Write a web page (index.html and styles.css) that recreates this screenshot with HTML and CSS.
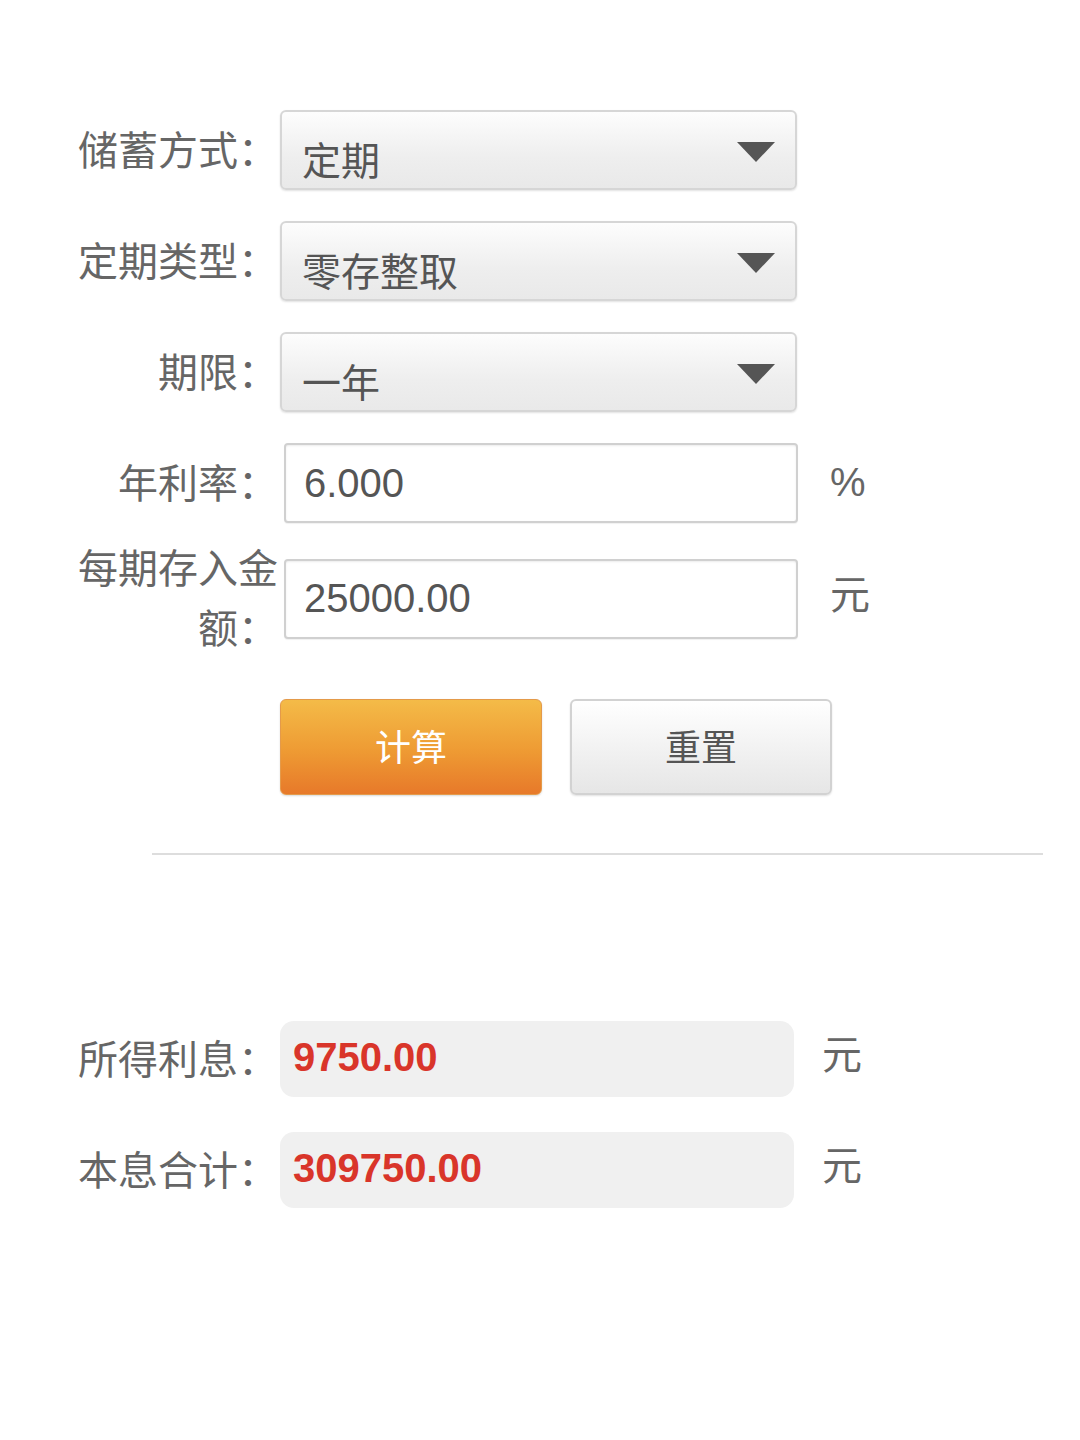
FILE: index.html
```html
<!DOCTYPE html>
<html lang="zh">
<head>
<meta charset="utf-8">
<title>存款计算器</title>
<link rel="stylesheet" href="styles.css">
</head>
<body>
<div class="page">
  <div class="form">
    <div class="row">
      <div class="label">储蓄方式：</div>
      <div class="select"><span class="sel-text">定期</span><span class="arrow"></span></div>
    </div>
    <div class="row">
      <div class="label">定期类型：</div>
      <div class="select"><span class="sel-text">零存整取</span><span class="arrow"></span></div>
    </div>
    <div class="row">
      <div class="label">期限：</div>
      <div class="select"><span class="sel-text">一年</span><span class="arrow"></span></div>
    </div>
    <div class="row">
      <div class="label">年利率：</div>
      <div class="input">6.000</div>
      <div class="unit unit-pct">%</div>
    </div>
    <div class="row tall">
      <div class="label">每期存入金额：</div>
      <div class="input">25000.00</div>
      <div class="unit">元</div>
    </div>
    <div class="buttons">
      <div class="btn btn-primary">计算</div>
      <div class="btn btn-default">重置</div>
    </div>
  </div>
  <div class="divider"></div>
  <div class="results">
    <div class="row">
      <div class="label">所得利息：</div>
      <div class="result">9750.00</div>
      <div class="unit unit-r">元</div>
    </div>
    <div class="row result-row2">
      <div class="label">本息合计：</div>
      <div class="result">309750.00</div>
      <div class="unit unit-r">元</div>
    </div>
  </div>
</div>
</body>
</html>
```
FILE: styles.css
```css
html, body {
  margin: 0;
  padding: 0;
  background: #ffffff;
}
body {
  font-family: "Liberation Sans", "Noto Sans CJK SC", sans-serif;
  color: #666666;
}
.page {
  width: 1080px;
}
.form {
  padding-top: 110px;
}
.row {
  display: flex;
  align-items: center;
  margin-top: 31px;
}
.form .row:first-child {
  margin-top: 0;
}
.row.tall {
  margin-top: 13px;
}
.label {
  width: 200px;
  margin-left: 78px;
  flex: none;
  text-align: right;
  font-family: "Noto Sans CJK SC", sans-serif;
  font-size: 40px;
  line-height: 60px;
  padding-bottom: 5px;
  color: #666666;
}
.select {
  box-sizing: border-box;
  width: 517px;
  height: 80px;
  margin-left: 2px;
  border: 2px solid #d6d6d6;
  border-radius: 6px;
  background: linear-gradient(#fdfdfd, #eeeeee 60%, #e9e9e9);
  box-shadow: 0 1px 2px rgba(0,0,0,0.12);
  display: flex;
  align-items: center;
  justify-content: space-between;
  padding: 0 20px 0 20px;
}
.sel-text {
  font-family: "Noto Sans CJK SC", sans-serif;
  font-size: 39px;
  color: #555555;
  padding-top: 16px;
  line-height: 1;
}
.arrow {
  width: 0;
  height: 0;
  border-left: 19px solid transparent;
  border-right: 19px solid transparent;
  border-top: 20px solid #555555;
  margin-top: 4px;
}
.input {
  box-sizing: border-box;
  width: 514px;
  height: 80px;
  margin-left: 6px;
  border: 2px solid #d0d0d0;
  border-radius: 4px;
  background: #ffffff;
  box-shadow: inset 0 1px 2px rgba(0,0,0,0.08), 0 1px 1px rgba(0,0,0,0.06);
  display: flex;
  align-items: center;
  padding-left: 18px;
  font-size: 40px;
  color: #555555;
}
.unit {
  margin-left: 32px;
  font-family: "Liberation Sans", "Noto Sans CJK SC", sans-serif;
  font-size: 40px;
  line-height: 1;
  padding-bottom: 8px;
  color: #666666;
}
.unit.unit-pct {
  padding-bottom: 2px;
}
.buttons {
  display: flex;
  gap: 28px;
  margin-top: 38px;
  margin-left: 280px;
}
.btn {
  box-sizing: border-box;
  width: 262px;
  height: 96px;
  border-radius: 6px;
  display: flex;
  align-items: center;
  justify-content: center;
  font-family: "Noto Sans CJK SC", sans-serif;
  font-size: 36px;
  padding-bottom: 4px;
}
.btn-primary {
  background: linear-gradient(#f4bb48, #ee9a33 55%, #e7792a);
  border: 1px solid #e49a4a;
  color: #ffffff;
  box-shadow: 0 1px 2px rgba(0,0,0,0.15);
}
.btn-default {
  background: linear-gradient(#ffffff, #f1f1f1 55%, #e6e6e6);
  border: 2px solid #d2d2d2;
  color: #555555;
  box-shadow: 0 1px 2px rgba(0,0,0,0.12);
}
.divider {
  margin-top: 58px;
  margin-left: 152px;
  width: 891px;
  height: 2px;
  background: #dddddd;
}
.results {
  padding-top: 166px;
}
.results .row {
  margin-top: 0;
}
.results .row.result-row2 {
  margin-top: 35px;
}
.result {
  box-sizing: border-box;
  width: 514px;
  height: 76px;
  margin-left: 2px;
  background: #f0f0f0;
  border-radius: 14px;
  display: flex;
  align-items: center;
  padding-left: 13px;
  padding-bottom: 3px;
  font-size: 40px;
  font-weight: bold;
  color: #d9352a;
}
.unit-r {
  margin-left: 28px;
}
```
